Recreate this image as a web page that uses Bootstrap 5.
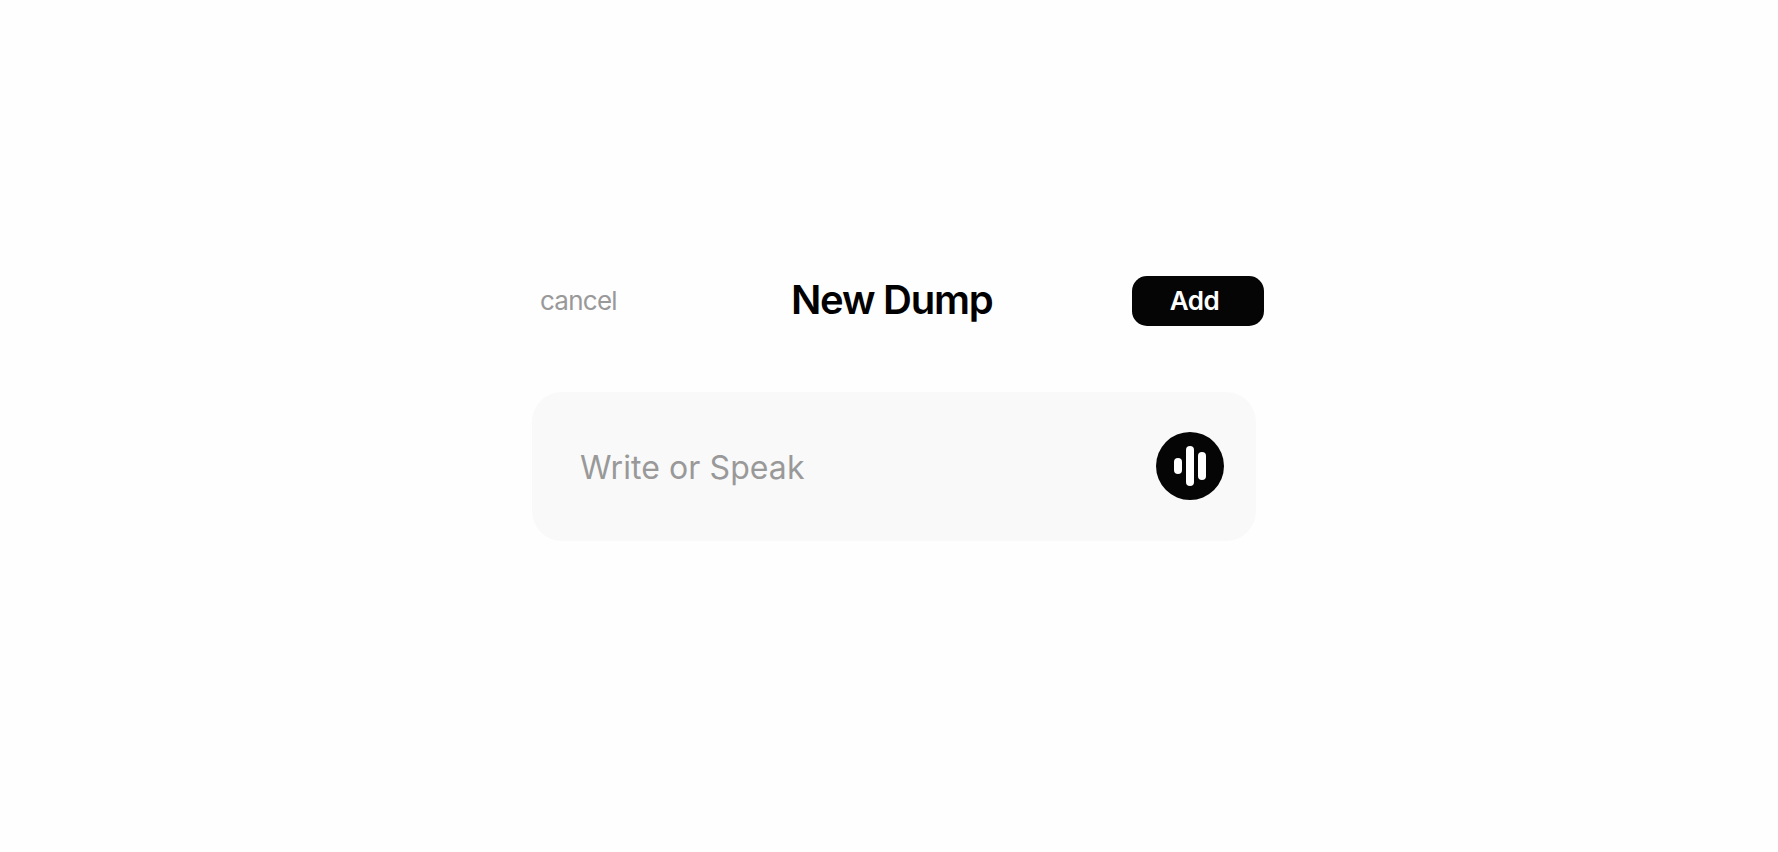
<!doctype html>
<html lang="en">
<head>
<meta charset="utf-8">
<title>New Dump</title>
<link href="https://cdn.jsdelivr.net/npm/bootstrap@5.3.0/dist/css/bootstrap.min.css" rel="stylesheet">
<style>
html,body{height:100%;background:#fefefe;font-family:Inter,"Liberation Sans",sans-serif;overflow:hidden}
.dump-wrap{width:732px;margin-left:532px;padding-top:276px}
.dump-head{height:50px;padding-left:8px}
.dump-cancel{width:251px;font-size:26px;font-weight:400;letter-spacing:-.75px;color:#999;line-height:50px}
.dump-title{font-size:40px;font-weight:600;letter-spacing:-1.25px;color:#000;line-height:50px;margin:-2px 0 0;flex-grow:1}
.dump-add{width:132px;height:50px;border-radius:15px;background:#050505;color:#fff;font-size:26px;font-weight:600;padding:0 7px 0 0;border:0;line-height:50px;letter-spacing:-.5px}
.dump-add:hover{background:#050505;color:#fff}
.dump-box{width:724px;height:149px;margin-top:66px;border-radius:30px;background:#f9f9f9;padding:0 32px 0 48px}
.dump-input{font-size:32px;color:#999;line-height:1;padding-top:2px;letter-spacing:.08px}
.dump-mic{width:68px;height:68px;background:#050505;border:0;padding:0;margin-bottom:2px}
</style>
</head>
<body>
<main class="dump-wrap">
  <header class="dump-head d-flex align-items-center">
    <div class="dump-cancel">cancel</div>
    <h1 class="dump-title">New Dump</h1>
    <button type="button" class="btn dump-add">Add</button>
  </header>
  <section class="dump-box d-flex align-items-center justify-content-between">
    <div class="dump-input">Write or Speak</div>
    <button type="button" class="dump-mic rounded-circle d-flex align-items-center justify-content-center" aria-label="Speak">
      <svg width="68" height="68" viewBox="0 0 68 68" fill="#fff" aria-hidden="true">
        <rect x="18" y="26" width="8" height="16" rx="4"/>
        <rect x="30" y="14" width="8" height="40" rx="4"/>
        <rect x="42" y="20" width="8" height="28" rx="4"/>
      </svg>
    </button>
  </section>
</main>
<script src="https://cdn.jsdelivr.net/npm/bootstrap@5.3.0/dist/js/bootstrap.bundle.min.js"></script>
</body>
</html>
